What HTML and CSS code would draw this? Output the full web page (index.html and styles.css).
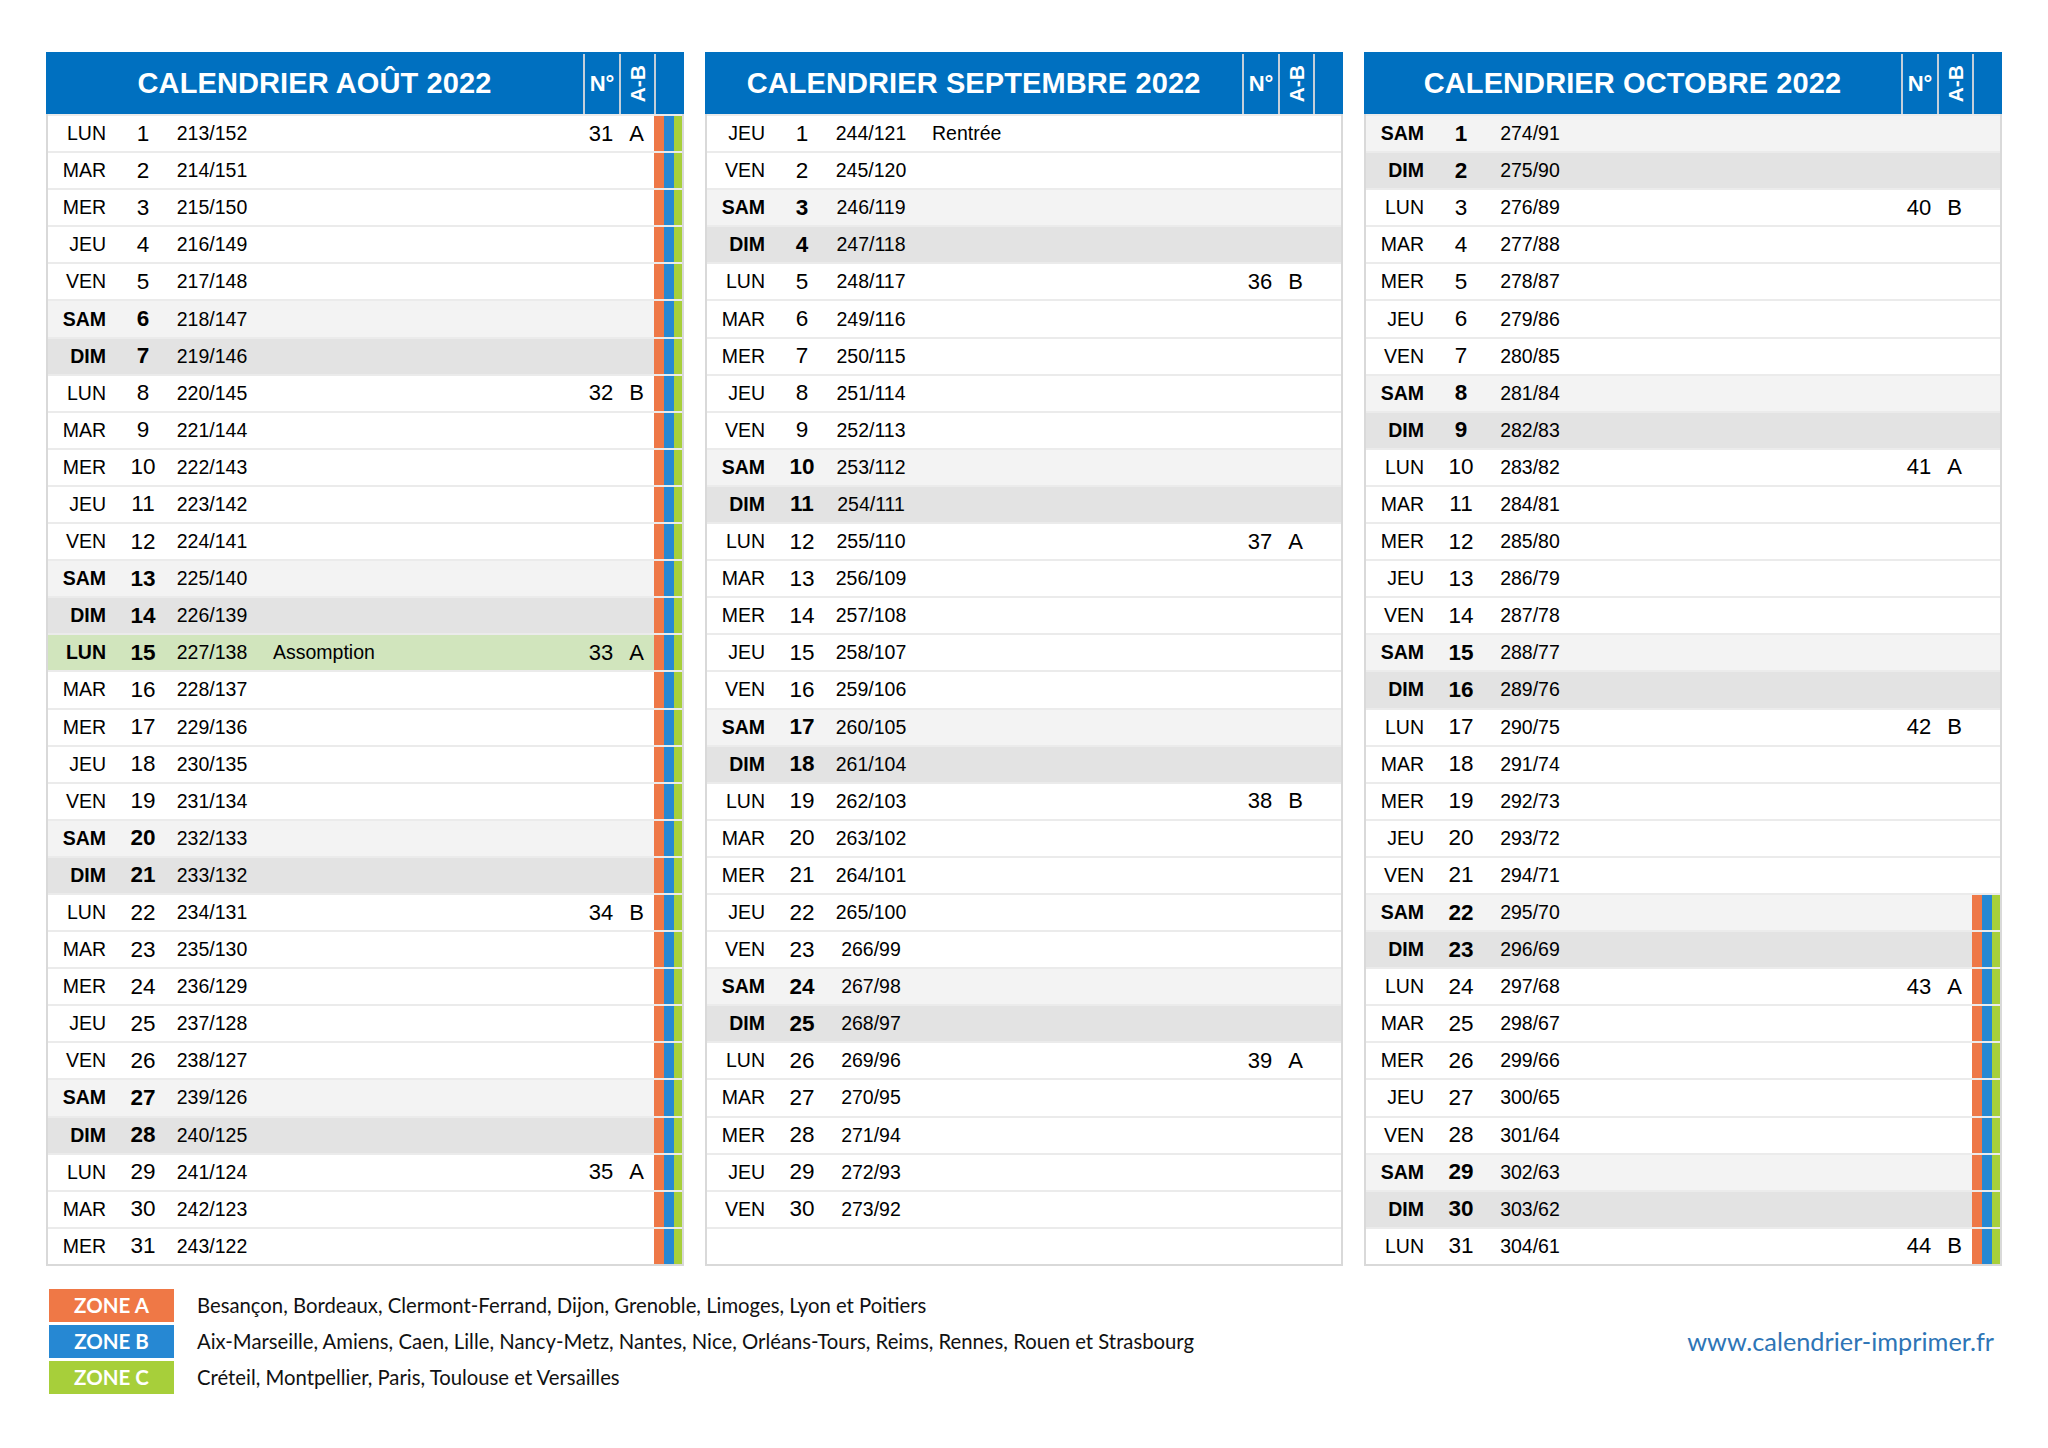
FILE: index.html
```html
<!DOCTYPE html>
<html lang="fr">
<head>
<meta charset="utf-8">
<title>Calendrier août - octobre 2022</title>
<link rel="stylesheet" href="styles.css">
</head>
<body>
<div class="page">
  <div class="months">
    <section class="month">
      <div class="head"><div class="title">CALENDRIER AOÛT 2022</div><div class="hc hno">N°</div><div class="hc hab"><span>A-B</span></div><div class="hc hz"></div></div>
      <div class="body">
        <div class="row vac"><span class="dn">LUN</span><span class="d">1</span><span class="y">213/152</span><span class="ev"></span><span class="wk">31</span><span class="ab">A</span><span class="z"></span></div>
        <div class="row vac"><span class="dn">MAR</span><span class="d">2</span><span class="y">214/151</span><span class="ev"></span><span class="wk"></span><span class="ab"></span><span class="z"></span></div>
        <div class="row vac"><span class="dn">MER</span><span class="d">3</span><span class="y">215/150</span><span class="ev"></span><span class="wk"></span><span class="ab"></span><span class="z"></span></div>
        <div class="row vac"><span class="dn">JEU</span><span class="d">4</span><span class="y">216/149</span><span class="ev"></span><span class="wk"></span><span class="ab"></span><span class="z"></span></div>
        <div class="row vac"><span class="dn">VEN</span><span class="d">5</span><span class="y">217/148</span><span class="ev"></span><span class="wk"></span><span class="ab"></span><span class="z"></span></div>
        <div class="row vac sat"><span class="dn">SAM</span><span class="d">6</span><span class="y">218/147</span><span class="ev"></span><span class="wk"></span><span class="ab"></span><span class="z"></span></div>
        <div class="row vac sun"><span class="dn">DIM</span><span class="d">7</span><span class="y">219/146</span><span class="ev"></span><span class="wk"></span><span class="ab"></span><span class="z"></span></div>
        <div class="row vac"><span class="dn">LUN</span><span class="d">8</span><span class="y">220/145</span><span class="ev"></span><span class="wk">32</span><span class="ab">B</span><span class="z"></span></div>
        <div class="row vac"><span class="dn">MAR</span><span class="d">9</span><span class="y">221/144</span><span class="ev"></span><span class="wk"></span><span class="ab"></span><span class="z"></span></div>
        <div class="row vac"><span class="dn">MER</span><span class="d">10</span><span class="y">222/143</span><span class="ev"></span><span class="wk"></span><span class="ab"></span><span class="z"></span></div>
        <div class="row vac"><span class="dn">JEU</span><span class="d">11</span><span class="y">223/142</span><span class="ev"></span><span class="wk"></span><span class="ab"></span><span class="z"></span></div>
        <div class="row vac"><span class="dn">VEN</span><span class="d">12</span><span class="y">224/141</span><span class="ev"></span><span class="wk"></span><span class="ab"></span><span class="z"></span></div>
        <div class="row vac sat"><span class="dn">SAM</span><span class="d">13</span><span class="y">225/140</span><span class="ev"></span><span class="wk"></span><span class="ab"></span><span class="z"></span></div>
        <div class="row vac sun"><span class="dn">DIM</span><span class="d">14</span><span class="y">226/139</span><span class="ev"></span><span class="wk"></span><span class="ab"></span><span class="z"></span></div>
        <div class="row vac hol"><span class="dn">LUN</span><span class="d">15</span><span class="y">227/138</span><span class="ev">Assomption</span><span class="wk">33</span><span class="ab">A</span><span class="z"></span></div>
        <div class="row vac"><span class="dn">MAR</span><span class="d">16</span><span class="y">228/137</span><span class="ev"></span><span class="wk"></span><span class="ab"></span><span class="z"></span></div>
        <div class="row vac"><span class="dn">MER</span><span class="d">17</span><span class="y">229/136</span><span class="ev"></span><span class="wk"></span><span class="ab"></span><span class="z"></span></div>
        <div class="row vac"><span class="dn">JEU</span><span class="d">18</span><span class="y">230/135</span><span class="ev"></span><span class="wk"></span><span class="ab"></span><span class="z"></span></div>
        <div class="row vac"><span class="dn">VEN</span><span class="d">19</span><span class="y">231/134</span><span class="ev"></span><span class="wk"></span><span class="ab"></span><span class="z"></span></div>
        <div class="row vac sat"><span class="dn">SAM</span><span class="d">20</span><span class="y">232/133</span><span class="ev"></span><span class="wk"></span><span class="ab"></span><span class="z"></span></div>
        <div class="row vac sun"><span class="dn">DIM</span><span class="d">21</span><span class="y">233/132</span><span class="ev"></span><span class="wk"></span><span class="ab"></span><span class="z"></span></div>
        <div class="row vac"><span class="dn">LUN</span><span class="d">22</span><span class="y">234/131</span><span class="ev"></span><span class="wk">34</span><span class="ab">B</span><span class="z"></span></div>
        <div class="row vac"><span class="dn">MAR</span><span class="d">23</span><span class="y">235/130</span><span class="ev"></span><span class="wk"></span><span class="ab"></span><span class="z"></span></div>
        <div class="row vac"><span class="dn">MER</span><span class="d">24</span><span class="y">236/129</span><span class="ev"></span><span class="wk"></span><span class="ab"></span><span class="z"></span></div>
        <div class="row vac"><span class="dn">JEU</span><span class="d">25</span><span class="y">237/128</span><span class="ev"></span><span class="wk"></span><span class="ab"></span><span class="z"></span></div>
        <div class="row vac"><span class="dn">VEN</span><span class="d">26</span><span class="y">238/127</span><span class="ev"></span><span class="wk"></span><span class="ab"></span><span class="z"></span></div>
        <div class="row vac sat"><span class="dn">SAM</span><span class="d">27</span><span class="y">239/126</span><span class="ev"></span><span class="wk"></span><span class="ab"></span><span class="z"></span></div>
        <div class="row vac sun"><span class="dn">DIM</span><span class="d">28</span><span class="y">240/125</span><span class="ev"></span><span class="wk"></span><span class="ab"></span><span class="z"></span></div>
        <div class="row vac"><span class="dn">LUN</span><span class="d">29</span><span class="y">241/124</span><span class="ev"></span><span class="wk">35</span><span class="ab">A</span><span class="z"></span></div>
        <div class="row vac"><span class="dn">MAR</span><span class="d">30</span><span class="y">242/123</span><span class="ev"></span><span class="wk"></span><span class="ab"></span><span class="z"></span></div>
        <div class="row vac"><span class="dn">MER</span><span class="d">31</span><span class="y">243/122</span><span class="ev"></span><span class="wk"></span><span class="ab"></span><span class="z"></span></div>
      </div>
    </section>

    <section class="month">
      <div class="head"><div class="title">CALENDRIER SEPTEMBRE 2022</div><div class="hc hno">N°</div><div class="hc hab"><span>A-B</span></div><div class="hc hz"></div></div>
      <div class="body">
        <div class="row"><span class="dn">JEU</span><span class="d">1</span><span class="y">244/121</span><span class="ev">Rentrée</span><span class="wk"></span><span class="ab"></span><span class="z"></span></div>
        <div class="row"><span class="dn">VEN</span><span class="d">2</span><span class="y">245/120</span><span class="ev"></span><span class="wk"></span><span class="ab"></span><span class="z"></span></div>
        <div class="row sat"><span class="dn">SAM</span><span class="d">3</span><span class="y">246/119</span><span class="ev"></span><span class="wk"></span><span class="ab"></span><span class="z"></span></div>
        <div class="row sun"><span class="dn">DIM</span><span class="d">4</span><span class="y">247/118</span><span class="ev"></span><span class="wk"></span><span class="ab"></span><span class="z"></span></div>
        <div class="row"><span class="dn">LUN</span><span class="d">5</span><span class="y">248/117</span><span class="ev"></span><span class="wk">36</span><span class="ab">B</span><span class="z"></span></div>
        <div class="row"><span class="dn">MAR</span><span class="d">6</span><span class="y">249/116</span><span class="ev"></span><span class="wk"></span><span class="ab"></span><span class="z"></span></div>
        <div class="row"><span class="dn">MER</span><span class="d">7</span><span class="y">250/115</span><span class="ev"></span><span class="wk"></span><span class="ab"></span><span class="z"></span></div>
        <div class="row"><span class="dn">JEU</span><span class="d">8</span><span class="y">251/114</span><span class="ev"></span><span class="wk"></span><span class="ab"></span><span class="z"></span></div>
        <div class="row"><span class="dn">VEN</span><span class="d">9</span><span class="y">252/113</span><span class="ev"></span><span class="wk"></span><span class="ab"></span><span class="z"></span></div>
        <div class="row sat"><span class="dn">SAM</span><span class="d">10</span><span class="y">253/112</span><span class="ev"></span><span class="wk"></span><span class="ab"></span><span class="z"></span></div>
        <div class="row sun"><span class="dn">DIM</span><span class="d">11</span><span class="y">254/111</span><span class="ev"></span><span class="wk"></span><span class="ab"></span><span class="z"></span></div>
        <div class="row"><span class="dn">LUN</span><span class="d">12</span><span class="y">255/110</span><span class="ev"></span><span class="wk">37</span><span class="ab">A</span><span class="z"></span></div>
        <div class="row"><span class="dn">MAR</span><span class="d">13</span><span class="y">256/109</span><span class="ev"></span><span class="wk"></span><span class="ab"></span><span class="z"></span></div>
        <div class="row"><span class="dn">MER</span><span class="d">14</span><span class="y">257/108</span><span class="ev"></span><span class="wk"></span><span class="ab"></span><span class="z"></span></div>
        <div class="row"><span class="dn">JEU</span><span class="d">15</span><span class="y">258/107</span><span class="ev"></span><span class="wk"></span><span class="ab"></span><span class="z"></span></div>
        <div class="row"><span class="dn">VEN</span><span class="d">16</span><span class="y">259/106</span><span class="ev"></span><span class="wk"></span><span class="ab"></span><span class="z"></span></div>
        <div class="row sat"><span class="dn">SAM</span><span class="d">17</span><span class="y">260/105</span><span class="ev"></span><span class="wk"></span><span class="ab"></span><span class="z"></span></div>
        <div class="row sun"><span class="dn">DIM</span><span class="d">18</span><span class="y">261/104</span><span class="ev"></span><span class="wk"></span><span class="ab"></span><span class="z"></span></div>
        <div class="row"><span class="dn">LUN</span><span class="d">19</span><span class="y">262/103</span><span class="ev"></span><span class="wk">38</span><span class="ab">B</span><span class="z"></span></div>
        <div class="row"><span class="dn">MAR</span><span class="d">20</span><span class="y">263/102</span><span class="ev"></span><span class="wk"></span><span class="ab"></span><span class="z"></span></div>
        <div class="row"><span class="dn">MER</span><span class="d">21</span><span class="y">264/101</span><span class="ev"></span><span class="wk"></span><span class="ab"></span><span class="z"></span></div>
        <div class="row"><span class="dn">JEU</span><span class="d">22</span><span class="y">265/100</span><span class="ev"></span><span class="wk"></span><span class="ab"></span><span class="z"></span></div>
        <div class="row"><span class="dn">VEN</span><span class="d">23</span><span class="y">266/99</span><span class="ev"></span><span class="wk"></span><span class="ab"></span><span class="z"></span></div>
        <div class="row sat"><span class="dn">SAM</span><span class="d">24</span><span class="y">267/98</span><span class="ev"></span><span class="wk"></span><span class="ab"></span><span class="z"></span></div>
        <div class="row sun"><span class="dn">DIM</span><span class="d">25</span><span class="y">268/97</span><span class="ev"></span><span class="wk"></span><span class="ab"></span><span class="z"></span></div>
        <div class="row"><span class="dn">LUN</span><span class="d">26</span><span class="y">269/96</span><span class="ev"></span><span class="wk">39</span><span class="ab">A</span><span class="z"></span></div>
        <div class="row"><span class="dn">MAR</span><span class="d">27</span><span class="y">270/95</span><span class="ev"></span><span class="wk"></span><span class="ab"></span><span class="z"></span></div>
        <div class="row"><span class="dn">MER</span><span class="d">28</span><span class="y">271/94</span><span class="ev"></span><span class="wk"></span><span class="ab"></span><span class="z"></span></div>
        <div class="row"><span class="dn">JEU</span><span class="d">29</span><span class="y">272/93</span><span class="ev"></span><span class="wk"></span><span class="ab"></span><span class="z"></span></div>
        <div class="row"><span class="dn">VEN</span><span class="d">30</span><span class="y">273/92</span><span class="ev"></span><span class="wk"></span><span class="ab"></span><span class="z"></span></div>
        <div class="row"><span class="dn"></span><span class="d"></span><span class="y"></span><span class="ev"></span><span class="wk"></span><span class="ab"></span><span class="z"></span></div>
      </div>
    </section>

    <section class="month">
      <div class="head"><div class="title">CALENDRIER OCTOBRE 2022</div><div class="hc hno">N°</div><div class="hc hab"><span>A-B</span></div><div class="hc hz"></div></div>
      <div class="body">
        <div class="row sat"><span class="dn">SAM</span><span class="d">1</span><span class="y">274/91</span><span class="ev"></span><span class="wk"></span><span class="ab"></span><span class="z"></span></div>
        <div class="row sun"><span class="dn">DIM</span><span class="d">2</span><span class="y">275/90</span><span class="ev"></span><span class="wk"></span><span class="ab"></span><span class="z"></span></div>
        <div class="row"><span class="dn">LUN</span><span class="d">3</span><span class="y">276/89</span><span class="ev"></span><span class="wk">40</span><span class="ab">B</span><span class="z"></span></div>
        <div class="row"><span class="dn">MAR</span><span class="d">4</span><span class="y">277/88</span><span class="ev"></span><span class="wk"></span><span class="ab"></span><span class="z"></span></div>
        <div class="row"><span class="dn">MER</span><span class="d">5</span><span class="y">278/87</span><span class="ev"></span><span class="wk"></span><span class="ab"></span><span class="z"></span></div>
        <div class="row"><span class="dn">JEU</span><span class="d">6</span><span class="y">279/86</span><span class="ev"></span><span class="wk"></span><span class="ab"></span><span class="z"></span></div>
        <div class="row"><span class="dn">VEN</span><span class="d">7</span><span class="y">280/85</span><span class="ev"></span><span class="wk"></span><span class="ab"></span><span class="z"></span></div>
        <div class="row sat"><span class="dn">SAM</span><span class="d">8</span><span class="y">281/84</span><span class="ev"></span><span class="wk"></span><span class="ab"></span><span class="z"></span></div>
        <div class="row sun"><span class="dn">DIM</span><span class="d">9</span><span class="y">282/83</span><span class="ev"></span><span class="wk"></span><span class="ab"></span><span class="z"></span></div>
        <div class="row"><span class="dn">LUN</span><span class="d">10</span><span class="y">283/82</span><span class="ev"></span><span class="wk">41</span><span class="ab">A</span><span class="z"></span></div>
        <div class="row"><span class="dn">MAR</span><span class="d">11</span><span class="y">284/81</span><span class="ev"></span><span class="wk"></span><span class="ab"></span><span class="z"></span></div>
        <div class="row"><span class="dn">MER</span><span class="d">12</span><span class="y">285/80</span><span class="ev"></span><span class="wk"></span><span class="ab"></span><span class="z"></span></div>
        <div class="row"><span class="dn">JEU</span><span class="d">13</span><span class="y">286/79</span><span class="ev"></span><span class="wk"></span><span class="ab"></span><span class="z"></span></div>
        <div class="row"><span class="dn">VEN</span><span class="d">14</span><span class="y">287/78</span><span class="ev"></span><span class="wk"></span><span class="ab"></span><span class="z"></span></div>
        <div class="row sat"><span class="dn">SAM</span><span class="d">15</span><span class="y">288/77</span><span class="ev"></span><span class="wk"></span><span class="ab"></span><span class="z"></span></div>
        <div class="row sun"><span class="dn">DIM</span><span class="d">16</span><span class="y">289/76</span><span class="ev"></span><span class="wk"></span><span class="ab"></span><span class="z"></span></div>
        <div class="row"><span class="dn">LUN</span><span class="d">17</span><span class="y">290/75</span><span class="ev"></span><span class="wk">42</span><span class="ab">B</span><span class="z"></span></div>
        <div class="row"><span class="dn">MAR</span><span class="d">18</span><span class="y">291/74</span><span class="ev"></span><span class="wk"></span><span class="ab"></span><span class="z"></span></div>
        <div class="row"><span class="dn">MER</span><span class="d">19</span><span class="y">292/73</span><span class="ev"></span><span class="wk"></span><span class="ab"></span><span class="z"></span></div>
        <div class="row"><span class="dn">JEU</span><span class="d">20</span><span class="y">293/72</span><span class="ev"></span><span class="wk"></span><span class="ab"></span><span class="z"></span></div>
        <div class="row"><span class="dn">VEN</span><span class="d">21</span><span class="y">294/71</span><span class="ev"></span><span class="wk"></span><span class="ab"></span><span class="z"></span></div>
        <div class="row vac sat"><span class="dn">SAM</span><span class="d">22</span><span class="y">295/70</span><span class="ev"></span><span class="wk"></span><span class="ab"></span><span class="z"></span></div>
        <div class="row vac sun"><span class="dn">DIM</span><span class="d">23</span><span class="y">296/69</span><span class="ev"></span><span class="wk"></span><span class="ab"></span><span class="z"></span></div>
        <div class="row vac"><span class="dn">LUN</span><span class="d">24</span><span class="y">297/68</span><span class="ev"></span><span class="wk">43</span><span class="ab">A</span><span class="z"></span></div>
        <div class="row vac"><span class="dn">MAR</span><span class="d">25</span><span class="y">298/67</span><span class="ev"></span><span class="wk"></span><span class="ab"></span><span class="z"></span></div>
        <div class="row vac"><span class="dn">MER</span><span class="d">26</span><span class="y">299/66</span><span class="ev"></span><span class="wk"></span><span class="ab"></span><span class="z"></span></div>
        <div class="row vac"><span class="dn">JEU</span><span class="d">27</span><span class="y">300/65</span><span class="ev"></span><span class="wk"></span><span class="ab"></span><span class="z"></span></div>
        <div class="row vac"><span class="dn">VEN</span><span class="d">28</span><span class="y">301/64</span><span class="ev"></span><span class="wk"></span><span class="ab"></span><span class="z"></span></div>
        <div class="row vac sat"><span class="dn">SAM</span><span class="d">29</span><span class="y">302/63</span><span class="ev"></span><span class="wk"></span><span class="ab"></span><span class="z"></span></div>
        <div class="row vac sun"><span class="dn">DIM</span><span class="d">30</span><span class="y">303/62</span><span class="ev"></span><span class="wk"></span><span class="ab"></span><span class="z"></span></div>
        <div class="row vac"><span class="dn">LUN</span><span class="d">31</span><span class="y">304/61</span><span class="ev"></span><span class="wk">44</span><span class="ab">B</span><span class="z"></span></div>
      </div>
    </section>
  </div>

  <div class="foot">
    <div class="legend">
      <div class="lrow"><span class="zone za">ZONE A</span><span class="ltxt">Besançon, Bordeaux, Clermont-Ferrand, Dijon, Grenoble, Limoges, Lyon et Poitiers</span></div>
      <div class="lrow"><span class="zone zb">ZONE B</span><span class="ltxt">Aix-Marseille, Amiens, Caen, Lille, Nancy-Metz, Nantes, Nice, Orléans-Tours, Reims, Rennes, Rouen et Strasbourg</span></div>
      <div class="lrow"><span class="zone zc">ZONE C</span><span class="ltxt">Créteil, Montpellier, Paris, Toulouse et Versailles</span></div>
    </div>
    <div class="site">www.calendrier-imprimer.fr</div>
  </div>
</div>
</body>
</html>
```

FILE: styles.css
```css
* { box-sizing: border-box; margin: 0; padding: 0; }

body {
  background: #ffffff;
  font-family: "Liberation Sans", Arial, sans-serif;
  color: #000;
}

.page {
  width: 2048px;
  padding: 52px 0 0 46px;
}

.months {
  display: flex;
  gap: 21px;
}

.month {
  width: 638px;
}

.head {
  display: flex;
  height: 62px;
  background: #0070c0;
  color: #fff;
}

.title {
  width: 537px;
  display: flex;
  align-items: center;
  justify-content: center;
  font-weight: bold;
  font-size: 29px;
  letter-spacing: 0.1px;
}

.hc {
  border-left: 2px solid #c4cfda;
  margin-top: 2px;
  display: flex;
  align-items: center;
  justify-content: center;
  font-weight: bold;
  font-size: 22px;
}

.hno { width: 36px; }
.hab { width: 35px; }
.hz { width: 30px; }

.hab span {
  writing-mode: vertical-rl;
  transform: rotate(180deg);
  font-size: 21px;
  line-height: 1;
}

.body {
  border: 2px solid #d9d9d9;
  border-top: 0;
}

.row {
  display: grid;
  grid-template-columns: 70px 50px 88px 327px 36px 35px 28px;
  height: 37.1px;
  border-top: 2px solid #ebebeb;
  align-items: center;
  font-size: 19.5px;
  background: #fff;
}

.dn { text-align: right; padding-right: 12px; }
.d { text-align: center; font-size: 22.5px; }
.y { text-align: center; }
.ev { padding-left: 17px; }
.wk, .ab { text-align: center; font-size: 22px; }
.z { align-self: stretch; }

.sat { background: #f3f3f3; }
.sun { background: #e3e3e3; }
.hol { background: #d1e5bd; }

.sat .dn, .sat .d, .sun .dn, .sun .d, .hol .dn, .hol .d { font-weight: bold; }

.vac .z {
  background: linear-gradient(to right, #ee7847 0 10px, #2688d3 10px 20px, #a7cf3a 20px 28px);
}

.foot {
  width: 1948px;
  margin-top: 23px;
  padding-left: 3px;
  display: flex;
  align-items: center;
  justify-content: space-between;
}

.legend {
  display: flex;
  flex-direction: column;
  gap: 3px;
}

.lrow {
  display: flex;
  align-items: center;
  gap: 23px;
}

.zone {
  width: 125px;
  height: 33px;
  color: #fff;
  font-family: Lato, "Open Sans", sans-serif;
  font-weight: bold;
  font-size: 20.5px;
  display: flex;
  align-items: center;
  justify-content: center;
}

.za { background: #ef7846; }
.zb { background: #2688d3; }
.zc { background: #a7cf3a; }

.ltxt {
  font-family: Lato, "Open Sans", sans-serif;
  font-size: 20.3px;
  color: #111;
}

.site {
  font-family: Lato, "Open Sans", sans-serif;
  font-size: 25.3px;
  color: #2e75b6;
}
```
